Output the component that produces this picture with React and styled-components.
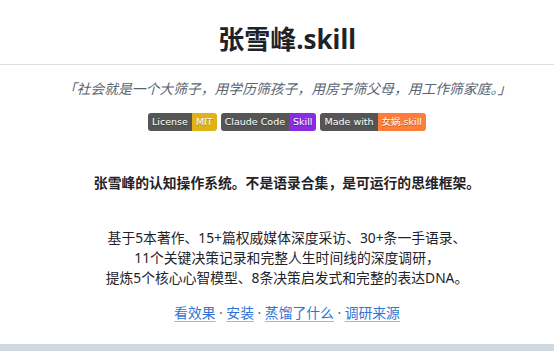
import styled, { createGlobalStyle } from "styled-components";

const Global = createGlobalStyle`
  body {
    margin: 0;
    overflow: hidden;
    background: #ffffff;
    font-family: "Noto Sans", "Noto Sans CJK SC", sans-serif;
    color: #1f2328;
  }
`;

const Page = styled.div`
  width: 574px;
  padding-top: 22px;
  text-align: center;
  font-size: 13.8px;
  line-height: 20px;
`;

const Title = styled.h1`
  margin: 0;
  font-size: 26px;
  line-height: 35px;
  font-weight: 700;
  padding-bottom: 7px;
  border-bottom: 1px solid #d8dee4;
  color: #1f2328;
`;

const Quote = styled.p`
  margin: 14px 0 0;
  font-size: 13.8px;
  font-style: italic;
  color: #59636e;
`;

const Badges = styled.div`
  margin-top: 14px;
  display: flex;
  justify-content: center;
  gap: 4px;
`;

const Badge = styled.span`
  display: inline-flex;
  height: 18px;
  border-radius: 3px;
  overflow: hidden;
  font-family: "DejaVu Sans", "Noto Sans CJK SC", sans-serif;
  font-size: 9.5px;
  line-height: 18px;
  color: #fff;
  text-shadow: 0 1px 0 rgba(1, 1, 1, 0.3);
`;

const Part = styled.span`
  padding: 0 4px;
  background: ${(p) => p.$bg || "#555555"};
`;

const Lead = styled.p`
  margin: 42px 0 0;
  font-weight: 700;
`;

const Body = styled.p`
  margin: 35px 0 0;
  color: #1f2328;
`;

const Links = styled.p`
  margin: 15px 0 0;
  color: #59636e;
`;

const Link = styled.a`
  color: #2f74d4;
  text-decoration: underline;
  text-decoration-color: rgba(9, 105, 218, 0.45);
  text-underline-offset: 3px;
`;

const Rule = styled.hr`
  margin: 21px 0 0;
  height: 7px;
  border: 0;
  background: #d1d9e0;
`;

const badges = [
  ["License", "MIT", "#dfb317"],
  ["Claude Code", "Skill", "#8a2be2"],
  ["Made with", "女娲.skill", "#fe7d37"],
];

export default function App() {
  return (
    <Page>
      <Global />
      <Title>张雪峰.skill</Title>
      <Quote>「社会就是一个大筛子，用学历筛孩子，用房子筛父母，用工作筛家庭。」</Quote>
      <Badges>
        {badges.map(([l, r, c]) => (
          <Badge key={l}>
            <Part>{l}</Part>
            <Part $bg={c}>{r}</Part>
          </Badge>
        ))}
      </Badges>
      <Lead>张雪峰的认知操作系统。不是语录合集，是可运行的思维框架。</Lead>
      <Body>
        基于5本著作、15+篇权威媒体深度采访、30+条一手语录、
        <br />
        11个关键决策记录和完整人生时间线的深度调研，
        <br />
        提炼5个核心心智模型、8条决策启发式和完整的表达DNA。
      </Body>
      <Links>
        <Link href="#demo">看效果</Link> · <Link href="#install">安装</Link> ·{" "}
        <Link href="#what">蒸馏了什么</Link> · <Link href="#sources">调研来源</Link>
      </Links>
      <Rule />
    </Page>
  );
}
